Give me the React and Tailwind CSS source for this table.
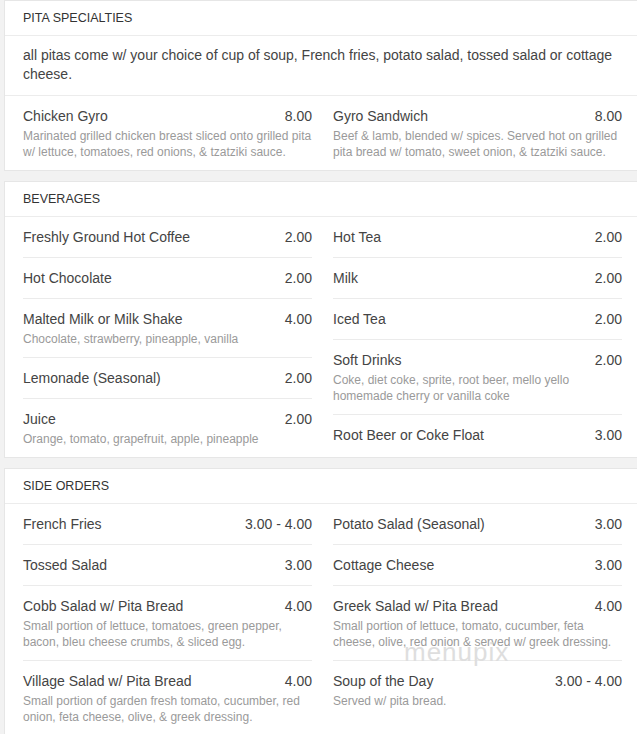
import React from "react";

const pita = {
  title: "PITA SPECIALTIES",
  note: "all pitas come w/ your choice of cup of soup, French fries, potato salad, tossed salad or cottage cheese.",
  left: [
    { n: "Chicken Gyro", p: "8.00", d: "Marinated grilled chicken breast sliced onto grilled pita w/ lettuce, tomatoes, red onions, & tzatziki sauce." },
  ],
  right: [
    { n: "Gyro Sandwich", p: "8.00", d: "Beef & lamb, blended w/ spices. Served hot on grilled pita bread w/ tomato, sweet onion, & tzatziki sauce." },
  ],
};

const bev = {
  title: "BEVERAGES",
  left: [
    { n: "Freshly Ground Hot Coffee", p: "2.00" },
    { n: "Hot Chocolate", p: "2.00" },
    { n: "Malted Milk or Milk Shake", p: "4.00", d: "Chocolate, strawberry, pineapple, vanilla" },
    { n: "Lemonade (Seasonal)", p: "2.00" },
    { n: "Juice", p: "2.00", d: "Orange, tomato, grapefruit, apple, pineapple" },
  ],
  right: [
    { n: "Hot Tea", p: "2.00" },
    { n: "Milk", p: "2.00" },
    { n: "Iced Tea", p: "2.00" },
    { n: "Soft Drinks", p: "2.00", d: "Coke, diet coke, sprite, root beer, mello yello homemade cherry or vanilla coke" },
    { n: "Root Beer or Coke Float", p: "3.00" },
  ],
};

const sides = {
  title: "SIDE ORDERS",
  left: [
    { n: "French Fries", p: "3.00 - 4.00" },
    { n: "Tossed Salad", p: "3.00" },
    { n: "Cobb Salad w/ Pita Bread", p: "4.00", d: "Small portion of lettuce, tomatoes, green pepper, bacon, bleu cheese crumbs, & sliced egg." },
    { n: "Village Salad w/ Pita Bread", p: "4.00", d: "Small portion of garden fresh tomato, cucumber, red onion, feta cheese, olive, & greek dressing." },
  ],
  right: [
    { n: "Potato Salad (Seasonal)", p: "3.00" },
    { n: "Cottage Cheese", p: "3.00" },
    { n: "Greek Salad w/ Pita Bread", p: "4.00", d: "Small portion of lettuce, tomato, cucumber, feta cheese, olive, red onion & served w/ greek dressing." },
    { n: "Soup of the Day", p: "3.00 - 4.00", d: "Served w/ pita bread." },
  ],
};

function Item({ it, last }) {
  return (
    <div className={"py-[10px] " + (last ? "" : "border-b border-[#ebebeb]")}>
      <div className="flex justify-between text-[14px] leading-[20px] text-[#444]">
        <span>{it.n}</span>
        <span>{it.p}</span>
      </div>
      {it.d && <div className="mt-[2px] text-[12px] leading-[16px] text-[#9a9a9a]">{it.d}</div>}
    </div>
  );
}

function Col({ items }) {
  return (
    <div className="flex flex-col">
      {items.map((it, i) => (
        <Item key={i} it={it} last={i === items.length - 1} />
      ))}
    </div>
  );
}

function Section({ s }) {
  return (
    <div className="bg-white border border-[#e6e6e6]">
      <div className="h-[35px] flex items-center px-[18px] border-b border-[#ececec] text-[12.5px] text-[#333]">
        {s.title}
      </div>
      {s.note && (
        <div className="px-[18px] pt-[10px] pb-[11px] border-b border-[#ececec] text-[14px] leading-[19px] text-[#444]">
          {s.note}
        </div>
      )}
      <div className="grid grid-cols-[289px_289px] gap-x-[21px] px-[18px]">
        <Col items={s.left} />
        <Col items={s.right} />
      </div>
    </div>
  );
}

export default function App() {
  return (
    <div
      className="w-[637px] h-[734px] overflow-hidden bg-[#f2f2f2] relative"
      style={{ fontFamily: '"Liberation Sans", Arial, sans-serif' }}
    >
      <div className="ml-[4px] w-[640px] flex flex-col gap-[10px]">
        <Section s={pita} />
        <Section s={bev} />
        <Section s={sides} />
      </div>
      <div className="absolute left-[404px] top-[633px] text-[26px] tracking-[1px] text-[#dedede] font-light pointer-events-none">
        menupix
      </div>
    </div>
  );
}
